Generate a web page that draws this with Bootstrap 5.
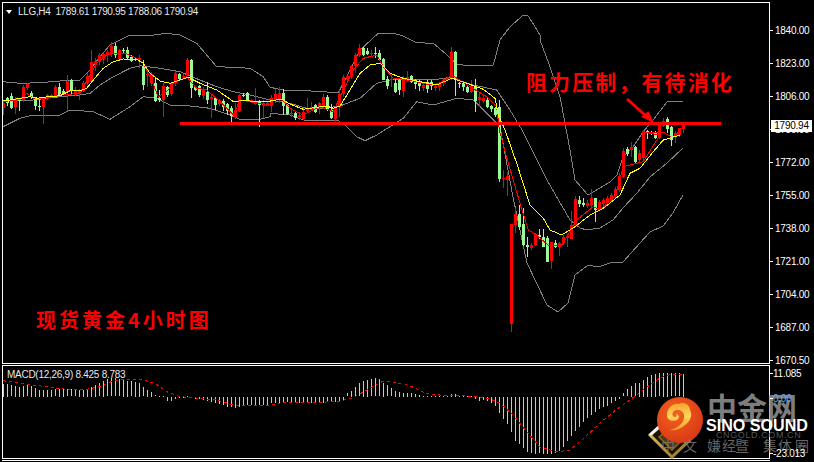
<!doctype html>
<html lang="zh">
<head>
<meta charset="utf-8">
<title>LLG,H4</title>
<link rel="stylesheet" href="https://cdn.jsdelivr.net/npm/bootstrap@5.3.0/dist/css/bootstrap.min.css">
<style>
html,body{margin:0;background:#000;}
body{width:814px;height:462px;overflow:hidden;font-family:"Liberation Sans",Arial,sans-serif;}
.term{width:814px;height:462px;padding:2px 0 0 2px;background:#000;color:#fff;}
.pane-main{height:362px;}
.pane-sub{height:94px;margin-top:1px;}
.plot{width:768px;border:1px solid #fff;background:#000;flex:none;overflow:hidden;}
.plot svg{display:block;position:absolute;left:0;top:0;}
.axis{width:44px;flex:none;font-size:10px;letter-spacing:-.25px;color:#fff;}
.axis-main{padding-top:12px;}
.tick{height:33px;line-height:33px;padding-left:5px;position:relative;white-space:nowrap;}
.tick::before{content:"";position:absolute;left:0;top:16px;width:3px;height:1px;background:#fff;}
.axis-sub .tick{padding-left:3px;z-index:1;}
.tick-top{margin-top:-8px;}
.tick-zero{margin-top:-8px;color:#6aa8f0;}
.tick-low{margin-top:22px;}
.footline{width:768px;height:1px;background:#fff;margin-top:1px;}
.legend{position:absolute;font-size:10px;color:#e8e8e8;white-space:nowrap;line-height:12px;}
.legend-top{top:3px;left:3px;display:flex;align-items:center;gap:6px;letter-spacing:-.33px;}
.legend-sub{top:3px;left:4px;letter-spacing:-.27px;}
.tri{width:0;height:0;border-left:3.5px solid transparent;border-right:3.5px solid transparent;border-top:4px solid #fff;}
.note{position:absolute;color:#f00;font-family:"Noto Sans CJK SC",sans-serif;font-weight:700;white-space:nowrap;line-height:1;}
.note-a{left:526px;top:71px;font-size:21px;letter-spacing:2.1px;}
.note-b{left:36px;top:310px;font-size:20px;letter-spacing:3px;}
.pricebox{position:absolute;left:771px;top:120px;width:41px;height:12px;line-height:12px;background:#fff;color:#000;font-size:10px;letter-spacing:-.25px;text-align:center;}
.brand{position:absolute;left:640px;top:385px;}
</style>
</head>
<body>
<div class="term position-relative d-flex flex-column">
  <div class="pane-main d-flex">
    <div class="plot position-relative">
      <svg id="mainSvg" width="766" height="360" viewBox="3 3 766 360" xmlns="http://www.w3.org/2000/svg"></svg>
      <div class="legend legend-top"><span class="tri"></span><span>LLG,H4&nbsp; 1789.61 1790.95 1788.06 1790.94</span></div>
    </div>
    <div class="axis axis-main d-flex flex-column">
      <div class="tick">1840.00</div><div class="tick">1823.00</div><div class="tick">1806.00</div><div class="tick">1789.00</div><div class="tick">1772.00</div><div class="tick">1755.00</div><div class="tick">1738.00</div><div class="tick">1721.00</div><div class="tick">1704.00</div><div class="tick">1687.00</div><div class="tick">1670.50</div>
    </div>
  </div>
  <div class="pane-sub d-flex">
    <div class="plot position-relative">
      <svg id="subSvg" width="766" height="92" viewBox="3 366 766 92" xmlns="http://www.w3.org/2000/svg"></svg>
      <div class="legend legend-sub">MACD(12,26,9) 8.425 8.783</div>
    </div>
    <div class="axis axis-sub d-flex flex-column">
      <div class="tick tick-top">11.085</div><div class="tick tick-zero">0.00</div><div class="tick tick-low">-23.013</div>
    </div>
  </div>
  <div class="footline"></div>
  <div class="note note-a">阻力压制，有待消化</div>
  <div class="note note-b">现货黄金4小时图</div>
  <div class="pricebox">1790.94</div>
  <svg class="brand" width="174" height="77" viewBox="640 385 174 77" xmlns="http://www.w3.org/2000/svg">
    <defs>
      <radialGradient id="ballG" cx=".4" cy=".35" r=".75"><stop offset="0" stop-color="#f0641e"/><stop offset="1" stop-color="#d83314"/></radialGradient>
      <linearGradient id="swirlG" x1="0" y1="0" x2="0" y2="1"><stop offset="0" stop-color="#f7a12e"/><stop offset=".5" stop-color="#ffd65a"/><stop offset="1" stop-color="#f39a22"/></linearGradient>
      <linearGradient id="goldG" x1="0" y1="0" x2="1" y2="1"><stop offset="0" stop-color="#f0d060"/><stop offset="1" stop-color="#8a6a20"/></linearGradient>
    </defs>
    <text x="707" y="419" font-family="'Noto Sans CJK SC',sans-serif" font-weight="700" font-size="30" fill="#8a8a8a" fill-opacity=".92">中金网</text>
    <polygon points="650,435 672,457 695,435 672,416" fill="#1a1408" stroke="url(#goldG)" stroke-width="3"/>
    <polygon points="659,437 672,450 685,437 672,426" fill="#4a3a18" stroke="#8a6a20" stroke-width="1.5"/>
    <path d="M666 434l5 6 7-8" fill="none" stroke="#6fb82e" stroke-width="2"/>
    <path d="M650 435l13-12" fill="none" stroke="#f0f0f0" stroke-width="3"/>
    <circle cx="680" cy="420" r="23" fill="url(#ballG)"/>
    <path transform="translate(657 397)" d="M10 18C10 11 16 6 22 7C27 4 33 8 33 13C36 18 33 25 28 28C24 32 18 34 13 33C20 31 26 27 27 21C28 16 24 12 19 13C15 14 14 19 18 20C20 20 20 18 19 17C22 17 23 21 20 23C15 25 10 23 10 18Z" fill="url(#swirlG)"/>
    <text x="706" y="431" font-family="'Liberation Sans',sans-serif" font-weight="700" font-size="17" textLength="102" lengthAdjust="spacingAndGlyphs" fill="#fff">SINO SOUND</text>
    <text x="716" y="438" font-family="'Liberation Sans',sans-serif" font-size="9" fill="#555" letter-spacing=".6">CNGOLD.COM.CN</text>
    <text x="661 683 707 722 735 763 778 795" y="451" font-family="'Noto Sans CJK SC',sans-serif" font-size="14" fill="#7a7a7a" fill-opacity=".85">中文嫌经暨集体圈</text>
  </svg>
</div>
<script>
const NS='http://www.w3.org/2000/svg';
const el=(p,n,a)=>{const e=document.createElementNS(NS,n);for(const k in a)e.setAttribute(k,a[k]);p.appendChild(e);return e;};
const xOf=i=>3+4*i;
const z1=(pts,ox)=>pts.map(p=>[ox+p[0]/3,p[1]/3]);
const z4=pts=>pts.map(p=>[480+p[0]/3,130+p[1]/3]);
const crisp={'shape-rendering':'crispEdges'};
const poly=(p,pts,c,w,extra)=>el(p,'polyline',Object.assign({points:pts.map(q=>q[0].toFixed(1)+','+q[1].toFixed(1)).join(' '),fill:'none',stroke:c,'stroke-width':w},crisp,extra||{}));

/* candle data: colour, body top, body bottom, wick top, wick bottom; first block is in 1/3 px */
const A=`r 310 325 300 345|g 295 310 292 318|g 288 325 278 325|r 298 322 290 340|g 298 305 295 335|r 262 300 255 305|r 252 265 250 272|g 280 292 272 295|g 292 320 290 330|g 318 322 295 335|r 295 322 290 372|r 285 297 283 300|r 285 292 283 294|r 260 288 255 292|g 262 285 250 290|g 272 282 268 286|r 242 275 225 332|g 240 272 238 285|r 272 285 262 290|r 270 280 266 298|r 248 272 242 275|r 228 250 220 255|r 185 245 150 250|r 182 190 175 215|r 165 185 160 195|r 162 178 158 190|r 155 165 150 185|r 138 160 125 170|g 138 165 130 175|r 150 178 148 180|g 150 152 145 160|g 150 175 140 178|g 170 183 166 186|g 176 180 172 184|r 175 180 165 205|g 198 255 180 270|r 222 226 210 260|r 222 250 215 256|g 250 305 235 308|g 295 302 270 305|r 258 300 250 352|g 262 285 258 290|r 250 283 248 286|r 220 250 212 258|g 222 238 218 242|r 228 232 222 238|r 180 225 175 228|g 180 265 178 295|g 262 270 258 274|g 258 285 255 290|r 270 288 262 298|g 275 298 245 310|r 290 296 285 355|g 293 315 290 330|r 300 312 296 318|g 303 320 298 335|g 312 332 310 345|g 325 350 318 365|r 330 350 310 358|r 285 332 282 335|g 285 287 280 292|g 280 300 275 304|r 300 302 296 308|r 305 312 265 316|g 305 315 300 382|r 308 316 300 355|r 308 316 304 320|r 295 320 285 335|r 282 300 268 310|r 280 300 260 308|g 280 318 268 345|g 316 342 312 345|r 338 342 330 350|g 338 352 332 358|r 345 352 335 360|r 335 355 325 360|r 325 335 295 340|r 320 328 305 332|g 315 335 312 338|r 310 325 305 340|r 292 320 282 322|g 292 330 285 332|g 330 355 312 358|r 320 355 318 365|r 282 320 270 350|r 232 282 225 290|r 228 238 224 242|r 198 232 195 236|r 165 198 160 220|r 145 165 132 170|g 145 165 140 168|g 152 162 145 166|r 158 160 150 168|g 160 162 142 175|g 158 178 150 180|g 178 240 175 242|g 238 258 228 268|r 238 240 228 262|g 250 278 238 280|g 240 270 235 285|r 235 275 228 290|r 230 242 212 245|g 228 245 225 248|g 242 252 238 268|g 248 258 240 272|r 255 265 245 272|g 245 265 240 280|g 245 258 240 270|r 258 265 252 272|r 250 262 245 272|r 240 250 235 258|r 235 240 232 244|r 155 232 142 240|g 155 240 152 288|g 248 252 245 262|g 250 262 248 272|g 260 275 255 280|r 258 275 240 280|g 260 302 238 338|r 292 302 280 322|r 295 305 285 310|g 300 322 295 325|g 318 328 315 335|g 325 345 320 350`;
const B=`g 107 179 100 182|r 178 179 170 188|r 176 180 172 196|r 224 324 224 332|r 214 225 208 233|g 214 227 205 230|g 224 245 208 246|g 245 247 237 257|r 245 248 243 250|r 234 245 233 246|g 235 237 229 239|g 237 247 229 247|g 238 262 236 262|r 242 261 242 269|g 243 247 240 248|r 243 247 242 256|r 237 243 235 245|r 236 238 235 247|r 225 239 211 239|r 199 225 196 227|g 200 204 196 207|g 203 205 198 207|r 203 206 200 208|r 198 205 189 207|g 198 210 198 222|r 202 210 200 211|r 200 204 198 206|r 198 203 196 205|r 195 200 193 202|r 189 196 187 198|r 176 190 173 192|r 151 177 148 178|g 149 154 147 156|r 147 150 142 157|g 147 162 146 163|r 153 160 150 162|r 131 158 130 162|g 131 133 130 139|g 132 134 131 135|g 132 138 131 139|r 125 138 124 139|r 121 126 118 127|g 119 129 117 133|g 127 140 126 146|r 133 137 131 143|r 128 135 128 137|r 125 129 124 133`;
const parse=(s,d)=>s.split('|').map(r=>{const f=r.split(' ');return {c:f[0],t:+f[1]/d,b:+f[2]/d,wt:+f[3]/d,wb:+f[4]/d};});
const candles=parse(A,3).concat(parse(B,1));

/* bands and averages */
const upper=z1([[9,245],[60,250],[120,248],[180,243],[240,240],[270,210],[300,170],[330,135],[390,105],[440,108],[500,100],[540,105],[590,130],[620,165],[650,200],[700,202],[750,205],[790,230],[810,262]],0)
 .concat(z1([[0,262],[50,272],[110,272],[170,276],[205,278],[230,230],[270,150],[325,100],[370,100],[400,108],[440,128],[490,130],[520,155],[560,192],[600,198],[670,195],[690,120],[720,80],[760,45],[775,48],[810,105]],270))
 .concat(z1([[0,120],[30,200],[60,290],[90,450]],540))
 .concat([[575,180],[588,195],[593,192],[610,182],[617,175],[623,157],[633,147],[643,132],[653,120],[667,102],[683,101]]);
const middle=z1([[9,300],[100,300],[180,290],[240,285],[270,280],[300,255],[340,230],[390,205],[420,197],[480,205],[540,215],[600,240],[650,260],[700,275],[750,285],[810,300]],0)
 .concat(z1([[0,300],[60,310],[110,325],[160,325],[210,318],[270,295],[320,250],[370,238],[430,238],[490,240],[540,232],[610,255],[680,270],[720,330]],270))
 .concat([[522,130],[547,180],[570,220],[580,228],[587,230],[600,228],[613,220],[623,208],[637,193],[650,177],[667,163],[683,148]]);
const lower=z1([[9,380],[60,355],[100,345],[180,345],[210,330],[280,335],[330,358],[390,320],[430,290],[470,295],[510,315],[570,318],[630,325],[690,345],[720,358],[780,358],[810,350]],0)
 .concat(z1([[0,340],[60,345],[100,360],[205,362],[225,375],[260,410],[285,422],[320,405],[400,355],[440,305],[490,315],[560,295],[610,300],[690,380]],270))
 .concat([[513,197],[527,263],[547,305],[558,312],[568,303],[575,275],[588,265],[598,267],[613,262],[623,262],[640,243],[650,232],[663,226],[673,213],[683,195]]);
const yellow=z1([[9,302],[30,300],[60,295],[90,290],[110,295],[130,292],[180,287],[210,272],[240,272],[260,265],[280,240],[310,205],[340,185],[370,177],[410,178],[430,190],[450,220],[480,243],[510,250],[540,240],[565,232],[600,250],[650,270],[680,290],[700,305],[725,302],[810,305]],0)
 .concat(z1([[0,302],[35,298],[60,312],[100,328],[140,322],[170,318],[190,325],[210,318],[240,270],[270,220],[300,195],[330,190],[360,220],[400,235],[450,245],[500,255],[545,235],[590,250],[640,268],[675,295],[685,345]],270))
 .concat(z4([[75,0],[110,100],[150,225],[190,265],[210,300],[245,315],[285,290],[330,255],[370,235],[420,195],[450,130],[480,115],[520,65],[550,30],[600,15]]));
const fast=z1([[9,305],[60,298],[80,280],[100,295],[130,295],[180,285],[240,280],[270,225],[290,190],[320,165],[340,160],[380,162],[410,175],[430,190],[450,230],[475,290],[500,275],[520,250],[560,230],[590,265],[620,270],[660,305],[700,345],[720,300],[810,315]],0)
 .concat(z1([[0,305],[30,295],[60,325],[100,345],[150,320],[190,335],[215,280],[250,210],[280,175],[320,165],[340,200],[370,235],[400,235],[480,255],[510,250],[545,225],[600,260],[650,290],[680,320]],270))
 .concat(z4([[58,0],[85,100],[120,220],[145,300],[165,312],[205,345],[245,345],[290,270],[340,230],[360,240],[405,200],[430,110],[490,95],[540,15]]))
 .concat([[643,132],[663,132],[673,138],[683,127]]);

const m=document.getElementById('mainSvg');
[upper,middle,lower].forEach(b=>poly(m,b,'#808080',1));
candles.forEach((k,i)=>{
  const x=xOf(i),col=k.c==='r'?'#ff0000':'#98fb98';
  el(m,'rect',Object.assign({x:x,y:Math.round(k.wt),width:1,height:Math.max(1,Math.round(k.wb-k.wt)),fill:col},crisp));
  el(m,'rect',Object.assign({x:x-1,y:Math.round(k.t),width:3,height:Math.max(1,Math.round(k.b-k.t)),fill:col},crisp));
});
poly(m,fast,'#ff0000',1);
poly(m,yellow,'#ffff00',1);
el(m,'rect',Object.assign({x:180,y:122,width:541,height:3,fill:'#ff0000'},crisp));
el(m,'path',{d:'M627 99L646 116',fill:'none',stroke:'#ff0000','stroke-width':3});
el(m,'polygon',{points:'653,122 641.7,116.7 648.3,111.7',fill:'#ff0000',stroke:'#ff0000','stroke-width':1});

/* MACD: histogram level per bar in 1/3 px above the 396 px row, baseline 108 */
const H=[72,72,76,78,80,78,76,78,84,90,90,90,90,88,86,86,88,88,88,90,90,90,80,75,70,62,58,55,55,58,60,62,64,66,68,82,90,96,106,107,107,
120,120,115,113,110,108,112,115,115,118,122,125,128,130,133,138,140,143,140,135,
134,134,134,134,134,134,128,126,126,125,125,126,126,127,127,127,127,127,126,126,125,124,123,122,118,
100,92,82,70,63,60,58,55,58,68,76,85,92,96,
98,98,99,102,105,107,108,107,107,107,108,108,102,102,107,107,108,107,114,120,
118,122,128,135,158,175,190,215,240,250,262,275,278,280,278,280,280,280,278,272,260,240,225,210,198,185,172,162,155,145,140,135,128,122,115,100,88,78,70,68,60,50,45,42,40,38,38,40,40,40,42];
const s=document.getElementById('subSvg');
const base=396.5;
H.forEach((v,i)=>{
  const y=v/3+360,top=Math.round(Math.min(y,base)),h=Math.max(1,Math.round(Math.abs(y-base)));
  el(s,'rect',Object.assign({x:xOf(i),y:top,width:1,height:h,fill:'#c8c8c8'},crisp));
});
const sig=z1([[9,62],[60,70],[100,75],[150,82],[200,88],[260,88],[300,80],[340,62],[380,58],[430,60],[465,70],[500,95],[540,110],[600,115],[650,120],[700,135],[800,137],[850,127],[950,128],[1020,123],[1060,113],[1100,90],[1150,63],[1197,70]],0).map(p=>[p[0],p[1]+360])
 .concat([[405,384],[415,388],[425,393],[440,395],[465,396],[480,397],[490,399]])
 .concat([[500,403],[513,415],[527,432],[540,447],[557,452],[570,450],[583,439],[600,423],[617,409],[630,400],[643,390],[660,378],[672,374],[683,374]]);
poly(s,sig,'#ff0000',1,{'stroke-dasharray':'3 3'});
</script>
<script src="https://cdn.jsdelivr.net/npm/bootstrap@5.3.0/dist/js/bootstrap.bundle.min.js"></script>
</body>
</html>
